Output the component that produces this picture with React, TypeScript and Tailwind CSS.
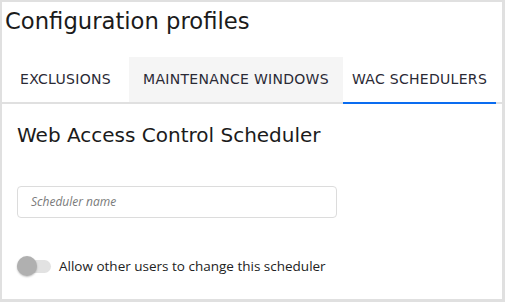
import React from "react";

const tabs = [
  { label: "EXCLUSIONS", w: "w-[127px]", extra: "" },
  { label: "MAINTENANCE WINDOWS", w: "w-[214px]", extra: "bg-[#f5f5f5]" },
  { label: "WAC SCHEDULERS", w: "w-[153px]", extra: "border-b-2 border-[#0a6cf0] -mb-[2px]" },
];

const App = () => {
  return (
    <div className="w-[505px] h-[302px] bg-white border-t-2 border-l-2 border-r-[3px] border-b-[3px] border-[#e0e0e0] flex flex-col">
      <h1 className="h-[55px] pl-[3px] pt-[5px] text-[22.7px] leading-[28px] text-[#1b1b1b] font-['DejaVu_Sans',sans-serif]">
        Configuration profiles
      </h1>
      <div className="flex h-[47px] border-b-2 border-[#e0e0e0] font-['DejaVu_Sans',sans-serif] text-[14px] text-[#2a2a35]">
        {tabs.map((t) => (
          <div
            key={t.label}
            className={`${t.w} ${t.extra} flex items-center justify-center tracking-[0.3px]`}
          >
            {t.label}
          </div>
        ))}
      </div>
      <div className="px-[15px]">
        <h2 className="mt-[19px] text-[20px] leading-[24px] text-[#1b1b1b] font-['DejaVu_Sans',sans-serif]">
          Web Access Control Scheduler
        </h2>
        <div className="mt-[39px] w-[320px] h-[32px] border border-[#dcdcdc] rounded-[4px] flex items-center pl-[13px]">
          <span className="italic text-[12px] text-[#7a7a7a] font-['Open_Sans',sans-serif]">
            Scheduler name
          </span>
        </div>
        <div className="mt-[38px] flex items-center gap-[8px]">
          <div className="relative w-[34px] h-[20px] flex items-center">
            <div className="w-[34px] h-[13px] rounded-full bg-[#e2e2e2]" />
            <div className="absolute left-0 top-0 w-[20px] h-[20px] rounded-full bg-[#b0b0b0] shadow-[0_1px_2px_rgba(0,0,0,0.25)]" />
          </div>
          <span className="text-[13.5px] text-[#222] font-['Open_Sans',sans-serif]">
            Allow other users to change this scheduler
          </span>
        </div>
      </div>
    </div>
  );
};

export default App;
